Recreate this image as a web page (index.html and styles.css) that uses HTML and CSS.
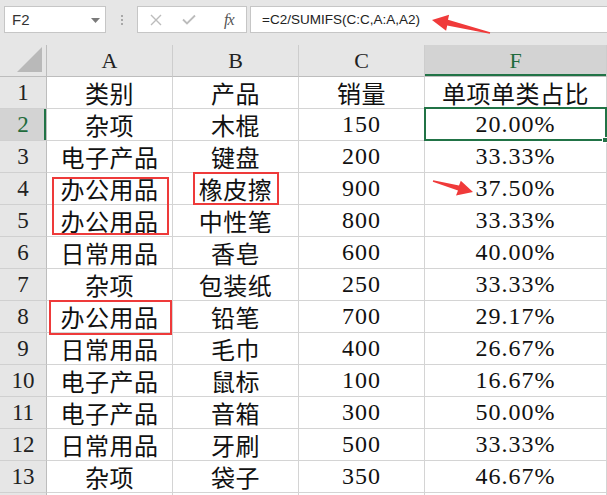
FILE: index.html
```html
<!DOCTYPE html>
<html>
<head>
<meta charset="utf-8">
<link rel="stylesheet" href="styles.css">
</head>
<body>
<div class="page">
  <div class="topbar">
    <div class="namebox">
      <span class="name">F2</span>
      <svg class="caret" width="9" height="5" viewBox="0 0 9 5"><polygon points="0,0 9,0 4.5,5" fill="#7a7a7a"/></svg>
    </div>
    <div class="dots"><span></span><span></span><span></span></div>
    <div class="fxbox">
      <svg class="ico" width="12" height="12" viewBox="0 0 12 12"><path d="M1 1 L11 11 M11 1 L1 11" stroke="#bcbcbc" stroke-width="1.4" fill="none"/></svg>
      <svg class="ico" width="14" height="11" viewBox="0 0 14 11"><path d="M1 5.5 L5 9.5 L13 1.5" stroke="#bcbcbc" stroke-width="1.8" fill="none"/></svg>
      <span class="fx">fx</span>
    </div>
    <div class="formula">=C2/SUMIFS(C:C,A:A,A2)</div>
  </div>

  <div class="sheet">
    <div class="grid">
      <div class="hd corner"><svg width="26" height="26" viewBox="0 0 26 26"><polygon points="25,0 25,25 0,25" fill="#b9b9b9"/></svg></div>
      <div class="hd col">A</div>
      <div class="hd col">B</div>
      <div class="hd col">C</div>
      <div class="hd col sel">F</div>

      <div class="hd row">1</div><div class="c">类别</div><div class="c">产品</div><div class="c">销量</div><div class="c">单项单类占比</div>
      <div class="hd row sel">2</div><div class="c">杂项</div><div class="c">木棍</div><div class="c n">150</div><div class="c n">20.00%</div>
      <div class="hd row">3</div><div class="c">电子产品</div><div class="c">键盘</div><div class="c n">200</div><div class="c n">33.33%</div>
      <div class="hd row">4</div><div class="c">办公用品</div><div class="c">橡皮擦</div><div class="c n">900</div><div class="c n">37.50%</div>
      <div class="hd row">5</div><div class="c">办公用品</div><div class="c">中性笔</div><div class="c n">800</div><div class="c n">33.33%</div>
      <div class="hd row">6</div><div class="c">日常用品</div><div class="c">香皂</div><div class="c n">600</div><div class="c n">40.00%</div>
      <div class="hd row">7</div><div class="c">杂项</div><div class="c">包装纸</div><div class="c n">250</div><div class="c n">33.33%</div>
      <div class="hd row">8</div><div class="c">办公用品</div><div class="c">铅笔</div><div class="c n">700</div><div class="c n">29.17%</div>
      <div class="hd row">9</div><div class="c">日常用品</div><div class="c">毛巾</div><div class="c n">400</div><div class="c n">26.67%</div>
      <div class="hd row">10</div><div class="c">电子产品</div><div class="c">鼠标</div><div class="c n">100</div><div class="c n">16.67%</div>
      <div class="hd row">11</div><div class="c">电子产品</div><div class="c">音箱</div><div class="c n">300</div><div class="c n">50.00%</div>
      <div class="hd row">12</div><div class="c">日常用品</div><div class="c">牙刷</div><div class="c n">500</div><div class="c n">33.33%</div>
      <div class="hd row">13</div><div class="c">杂项</div><div class="c">袋子</div><div class="c n">350</div><div class="c n">46.67%</div>
      <div class="hd row"></div><div class="c"></div><div class="c"></div><div class="c"></div><div class="c"></div>
    </div>

    <div class="selection"></div>
    <div class="handle"></div>
    <div class="redbox box-a45"></div>
    <div class="redbox box-b4"></div>
    <div class="redbox box-a8"></div>
  </div>

  <svg class="arrows" width="607" height="495" viewBox="0 0 607 495">
    <polygon fill="#f03a3a" points="432,20 449.1,14.7 448,19.8 490.2,32.2 489.8,33.8 447.2,25.5 446.1,30.8"/>
    <polygon fill="#f03a3a" points="473,192 460.8,180.8 459,185.6 433.2,180.2 432.8,181.8 458,190.4 456,195.5"/>
  </svg>
</div>
</body>
</html>
```

FILE: styles.css
```css
* { box-sizing: border-box; }
html, body { margin: 0; padding: 0; }
body { background: #ffffff; width: 607px; height: 495px; overflow: hidden; }

.page {
  position: relative;
  width: 607px;
  height: 495px;
  overflow: hidden;
  font-family: "Liberation Serif", "Noto Sans CJK SC", serif;
}

.topbar {
  height: 45px;
  background: #e6e6e6;
  display: flex;
  align-items: flex-start;
  padding-top: 6px;
}

.namebox {
  margin-left: 4px;
  width: 102px;
  height: 27px;
  background: #fff;
  border: 1px solid #c6c6c6;
  display: flex;
  align-items: center;
  justify-content: space-between;
  padding: 0 5px 0 7px;
}
.name {
  font-family: "Liberation Sans", Arial, sans-serif;
  font-size: 15px;
  color: #333;
}
.caret { margin-top: 1px; }

.dots {
  width: 31px;
  height: 27px;
  display: flex;
  flex-direction: column;
  align-items: center;
  justify-content: center;
  gap: 2px;
}
.dots span {
  width: 2px;
  height: 2px;
  background: #a8a8a8;
}

.fxbox {
  width: 110px;
  height: 27px;
  background: #fff;
  border: 1px solid #c6c6c6;
  display: flex;
  align-items: center;
  padding-left: 12px;
  gap: 20px;
}
.fx {
  font-family: "Liberation Serif", serif;
  font-style: italic;
  font-size: 16px;
  color: #555;
  margin-left: 8px;
  letter-spacing: -1px;
}

.formula {
  flex: 1;
  margin-left: 3px;
  height: 27px;
  background: #fff;
  border: 1px solid #c6c6c6;
  border-right: none;
  font-family: "Liberation Sans", Arial, sans-serif;
  font-size: 13.5px;
  color: #222;
  display: flex;
  align-items: center;
  padding-left: 11px;
}

.sheet {
  position: relative;
}

.grid {
  display: grid;
  grid-template-columns: 47px 126px 126px 126px 182px;
  grid-auto-rows: 32px;
}

.hd {
  background: #e6e6e6;
  display: flex;
  align-items: center;
  justify-content: center;
  color: #222;
}
.col {
  border-right: 1px solid #cdcdcd;
  border-bottom: 1px solid #bdbdbd;
  font-size: 22px;
}
.corner {
  border-right: 1px solid #bdbdbd;
  border-bottom: 1px solid #bdbdbd;
  justify-content: flex-end;
  align-items: flex-end;
  padding: 0 3px 3px 0;
}
.row {
  border-right: 1px solid #bdbdbd;
  border-bottom: 1px solid #d0d0d0;
  font-size: 23px;
}
.col.sel {
  background: #d3d3d3;
  color: #1f6b3c;
  box-shadow: inset 0 -2px 0 #217346;
}
.row.sel {
  background: #d3d3d3;
  color: #1f6b3c;
  box-shadow: inset -2px 0 0 #217346;
}

.c {
  border-right: 1px solid #d4d4d4;
  border-bottom: 1px solid #d4d4d4;
  display: flex;
  align-items: center;
  justify-content: center;
  font-size: 24px;
  color: #111;
  letter-spacing: 0.5px;
  white-space: nowrap;
}
.c.n {
  font-family: "Liberation Serif", serif;
  letter-spacing: 1px;
}

.selection {
  position: absolute;
  left: 424px;
  top: 62px;
  width: 183px;
  height: 34px;
  border: 2px solid #217346;
}
.handle {
  position: absolute;
  left: 602px;
  top: 92px;
  width: 6px;
  height: 6px;
  background: #217346;
  border: 1px solid #fff;
}

.redbox {
  position: absolute;
  border: 2px solid #ee3a3a;
}
.box-a45 { left: 52px; top: 132px; width: 117px; height: 58px; }
.box-b4 { left: 193px; top: 127px; width: 86px; height: 33px; }
.box-a8 { left: 49px; top: 255px; width: 123px; height: 35px; }

.arrows {
  position: absolute;
  left: 0;
  top: 0;
  pointer-events: none;
}
```
